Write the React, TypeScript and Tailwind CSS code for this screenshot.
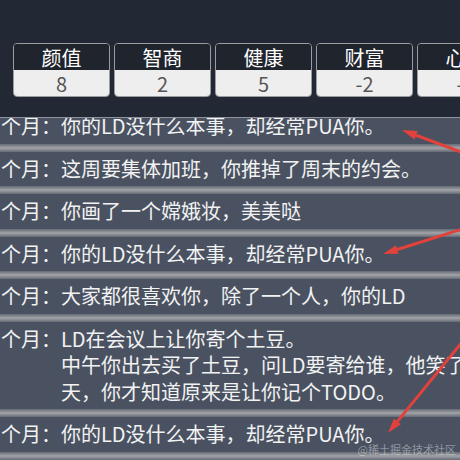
const stats = [
  { label: '颜值', value: '8' },
  { label: '智商', value: '2' },
  { label: '健康', value: '5' },
  { label: '财富', value: '-2' },
  { label: '心情', value: '-1' },
];

const events: string[][] = [
  ['你的LD没什么本事，却经常PUA你。'],
  ['这周要集体加班，你推掉了周末的约会。'],
  ['你画了一个嫦娥妆，美美哒'],
  ['你的LD没什么本事，却经常PUA你。'],
  ['大家都很喜欢你，除了一个人，你的LD'],
  ['LD在会议上让你寄个土豆。', '中午你出去买了土豆，问LD要寄给谁，他笑了笑。第二', '天，你才知道原来是让你记个TODO。'],
  ['你的LD没什么本事，却经常PUA你。'],
];

// red annotation arrows: [tailX, tailY, tipX, tipY]
const arrows = [
  [472, 156, 402, 130],
  [472, 226, 383, 254],
  [472, 330, 388, 433],
];

function Arrow({ a }: { a: number[] }) {
  const [x1, y1, x2, y2] = a;
  const dx = x2 - x1;
  const dy = y2 - y1;
  const len = Math.hypot(dx, dy);
  const ux = dx / len;
  const uy = dy / len;
  const bx = x2 - ux * 15;
  const by = y2 - uy * 15;
  const px = -uy * 4.5;
  const py = ux * 4.5;
  return (
    <g>
      <line x1={x1} y1={y1} x2={bx} y2={by} stroke="#e2413c" strokeWidth="3" />
      <polygon
        points={`${x2},${y2} ${bx + px},${by + py} ${bx - px},${by - py}`}
        fill="#e2413c"
      />
    </g>
  );
}

function Separator() {
  return <div className="h-[8px] bg-gradient-to-b from-[#656b75] via-[#a2a4a8] to-[#656b75]" />;
}

export default function App() {
  return (
    <div className="relative w-[460px] h-[460px] overflow-hidden bg-[#232934] font-['Noto_Sans_CJK_SC',sans-serif]">
      {/* stats bar */}
      <div className="flex gap-[4px] pl-[13px] pt-[43px]">
        {stats.map((s) => (
          <div
            key={s.label}
            className="w-[97px] h-[54px] shrink-0 rounded-[4px] border border-[#9a9ca0] overflow-hidden flex flex-col"
          >
            <div className="h-[26px] bg-[#1f242d] text-white text-[20px] leading-[27px] text-center">
              {s.label}
            </div>
            <div className="flex-1 bg-[#eeeeee] text-[#555] text-[20px] leading-[28px] text-center">
              {s.value}
            </div>
          </div>
        ))}
      </div>

      {/* events list */}
      <div className="mt-[20px] border-t border-[#8f949c] overflow-hidden">
        <div className="-mt-[9px]">
          {events.map((lines, i) => (
            <div key={i}>
              <div className="flex bg-[#4a5262] py-[4px] text-[20px] leading-[26.5px] text-[#f2f2f2] whitespace-nowrap">
                <span className="w-[61px] shrink-0 pl-[1px]">个月：</span>
                <div>
                  {lines.map((l, j) => (
                    <div key={j}>{l}</div>
                  ))}
                </div>
              </div>
              <Separator />
            </div>
          ))}
        </div>
      </div>

      <svg className="absolute inset-0 pointer-events-none" width="460" height="460">
        {arrows.map((a, i) => (
          <Arrow key={i} a={a} />
        ))}
      </svg>

      <div className="absolute right-[4px] bottom-[3px] text-[11px] leading-[16px] text-white/40">@稀土掘金技术社区</div>
    </div>
  );
}
